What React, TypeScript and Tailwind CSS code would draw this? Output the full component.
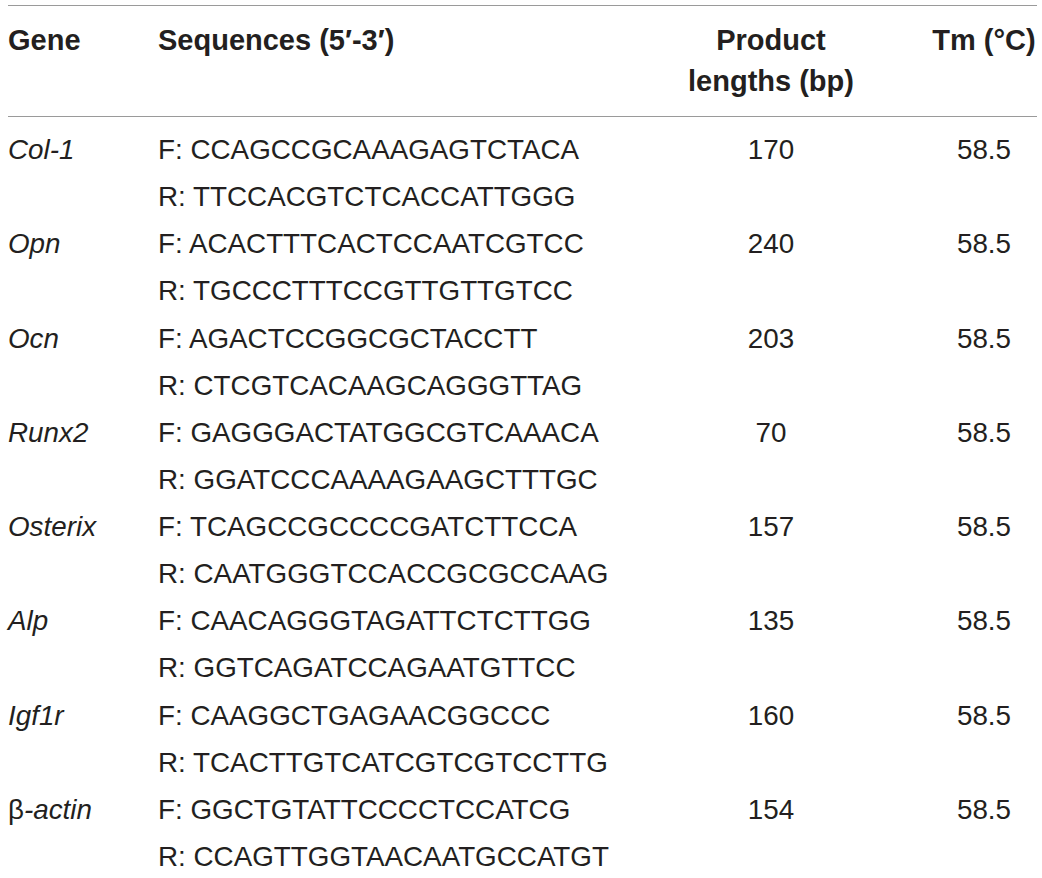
const rows = [
  { gene: "Col-1", f: "CCAGCCGCAAAGAGTCTACA", r: "TTCCACGTCTCACCATTGGG", len: "170", tm: "58.5" },
  { gene: "Opn", f: "ACACTTTCACTCCAATCGTCC", r: "TGCCCTTTCCGTTGTTGTCC", len: "240", tm: "58.5" },
  { gene: "Ocn", f: "AGACTCCGGCGCTACCTT", r: "CTCGTCACAAGCAGGGTTAG", len: "203", tm: "58.5" },
  { gene: "Runx2", f: "GAGGGACTATGGCGTCAAACA", r: "GGATCCCAAAAGAAGCTTTGC", len: "70", tm: "58.5" },
  { gene: "Osterix", f: "TCAGCCGCCCCGATCTTCCA", r: "CAATGGGTCCACCGCGCCAAG", len: "157", tm: "58.5" },
  { gene: "Alp", f: "CAACAGGGTAGATTCTCTTGG", r: "GGTCAGATCCAGAATGTTCC", len: "135", tm: "58.5" },
  { gene: "Igf1r", f: "CAAGGCTGAGAACGGCCC", r: "TCACTTGTCATCGTCGTCCTTG", len: "160", tm: "58.5" },
  { gene: "-actin", beta: true, f: "GGCTGTATTCCCCTCCATCG", r: "CCAGTTGGTAACAATGCCATGT", len: "154", tm: "58.5" },
];

export default function App() {
  return (
    <div className="bg-white w-[1042px] h-[878px] pt-[5px] text-[#231f20] font-['Liberation_Sans',Arial,sans-serif]">
      <div className="ml-[8px] w-[1029px]">
        {/* header */}
        <div className="grid grid-cols-[150px_493px_240px_146px] border-t border-b border-[#9a9a9a] pt-[14px] pb-[14px] text-[29px] leading-[41px] font-bold">
          <div>Gene</div>
          <div>Sequences (5′-3′)</div>
          <div className="text-center">
            Product
            <br />
            lengths (bp)
          </div>
          <div className="pl-[40px] text-center">Tm (°C)</div>
        </div>

        {/* body */}
        <div className="pt-[9px] text-[27.8px] leading-[47.13px]">
          {rows.map((row) => (
            <div key={row.gene} className="grid grid-cols-[150px_493px_240px_146px]">
              <div>
                {row.beta ? (
                  <>
                    β<span className="italic">{row.gene}</span>
                  </>
                ) : (
                  <span className="italic">{row.gene}</span>
                )}
              </div>
              <div className="flex flex-col whitespace-nowrap">
                <span>F: {row.f}</span>
                <span>R: {row.r}</span>
              </div>
              <div className="text-center">{row.len}</div>
              <div className="pl-[40px] text-center">{row.tm}</div>
            </div>
          ))}
        </div>
      </div>
    </div>
  );
}
